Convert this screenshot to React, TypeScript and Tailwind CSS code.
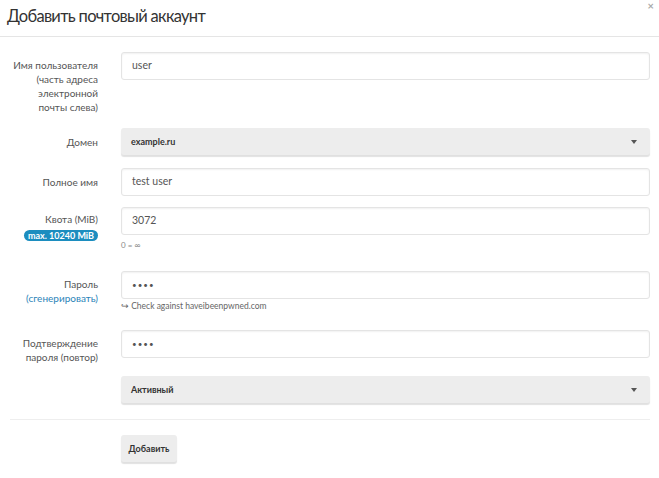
import type { ReactNode } from 'react'

const font = { fontFamily: 'Lato, "Open Sans", sans-serif' }

function Label({ children }: { children: ReactNode }) {
  return (
    <div className="w-[98px] shrink-0 text-right text-[10px] leading-[14px] text-[#555]">
      {children}
    </div>
  )
}

function TextInput({ value, dots }: { value: string; dots?: boolean }) {
  return (
    <div
      className={
        'flex h-[28px] items-center rounded-[3px] border border-[#e4e4e4] bg-white pl-[10px] text-[#555] shadow-[inset_0_1px_2px_rgba(0,0,0,0.06)] ' +
        (dots ? 'text-[8px] tracking-[1px]' : 'text-[10.5px]')
      }
    >
      {value}
    </div>
  )
}

function SelectBox({ value }: { value: string }) {
  return (
    <div className="flex h-[27px] items-center justify-between rounded-[3px] bg-[#ededed] pl-[10px] pr-[13px] text-[9px] font-bold text-[#333] shadow-[0_2px_1px_rgba(0,0,0,0.12)]">
      <span>{value}</span>
      <span className="h-0 w-0 border-x-[3px] border-t-[4px] border-x-transparent border-t-[#555]" />
    </div>
  )
}

export default function App() {
  return (
    <div className="h-[478px] w-[659px] bg-white" style={font}>
      <div className="relative h-[37px] border-b border-[#e5e5e5] pl-[7px] pt-[1px]">
        <h4 className="text-[16.5px] leading-[30px] tracking-[-0.7px] text-[#333]">
          Добавить почтовый аккаунт
        </h4>
        <span className="absolute right-[5px] top-[0px] text-[11px] font-bold leading-[12px] text-[#aaa]">×</span>
      </div>

      <div className="pr-[9px]">
        {/* username */}
        <div className="mt-[15px] flex gap-[23px]">
          <div className="pt-[6px]">
            <Label>
              Имя пользователя
              <br />
              (часть адреса
              <br />
              электронной
              <br />
              почты слева)
            </Label>
          </div>
          <div className="flex-1">
            <TextInput value="user" />
          </div>
        </div>

        {/* domain */}
        <div className="mt-[14px] flex items-center gap-[23px]">
          <Label>Домен</Label>
          <div className="flex-1">
            <SelectBox value="example.ru" />
          </div>
        </div>

        {/* full name */}
        <div className="mt-[13px] flex items-center gap-[23px]">
          <Label>Полное имя</Label>
          <div className="flex-1">
            <TextInput value="test user" />
          </div>
        </div>

        {/* quota */}
        <div className="mt-[11px] flex gap-[23px]">
          <div className="flex w-[98px] shrink-0 flex-col items-end pt-[5px]">
            <Label>Квота (MiB)</Label>
            <span className="mt-[4px] rounded-full bg-[#1c8dbf] px-[4px] text-[9px] font-bold leading-[11px] text-white">
              max. 10240 MiB
            </span>
          </div>
          <div className="flex-1">
            <TextInput value="3072" />
            <div className="mt-[5px] text-[8px] leading-[10px] text-[#888]">0 = ∞</div>
          </div>
        </div>

        {/* password */}
        <div className="mt-[21px] flex gap-[23px]">
          <div className="pt-[6px]">
            <Label>
              Пароль
              <br />
              <span className="text-[#2a83b8]">(сгенерировать)</span>
            </Label>
          </div>
          <div className="flex-1">
            <TextInput value="••••" dots />
            <div className="mt-[2px] text-[8.5px] leading-[11px] text-[#666]">
              ↪ Check against haveibeenpwned.com
            </div>
          </div>
        </div>

        {/* confirm */}
        <div className="mt-[18px] flex gap-[23px]">
          <div className="pt-[6px]">
            <Label>
              Подтверждение
              <br />
              пароля (повтор)
            </Label>
          </div>
          <div className="flex-1">
            <TextInput value="••••" dots />
          </div>
        </div>

        {/* active */}
        <div className="mt-[12px] flex gap-[23px]">
          <div className="w-[98px] shrink-0" />
          <div className="flex-1">
            <SelectBox value="Активный" />
          </div>
        </div>

        <div className="ml-[10px] mt-[16px] border-t border-[#eee]" />

        <div className="mt-[15px] flex gap-[23px]">
          <div className="w-[98px] shrink-0" />
          <button className="flex h-[27px] w-[56px] items-center justify-center rounded-[3px] bg-[#ededed] text-[9px] font-bold text-[#333] shadow-[0_2px_1px_rgba(0,0,0,0.12)]">
            Добавить
          </button>
        </div>
      </div>
    </div>
  )
}
